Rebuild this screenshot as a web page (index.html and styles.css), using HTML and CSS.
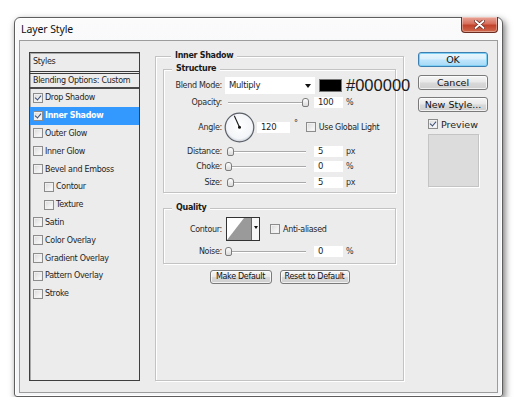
FILE: index.html
```html
<!DOCTYPE html>
<html>
<head>
<meta charset="utf-8">
<link rel="stylesheet" href="styles.css">
</head>
<body>
<div class="window">
  <div class="titlebar">
    <span class="title">Layer Style</span>
    <button class="close" aria-label="Close">
      <svg width="11" height="9" viewBox="0 0 11 9"><path d="M1.5 1 L9.5 8 M9.5 1 L1.5 8" stroke="#6b2a20" stroke-width="3.4" stroke-linecap="round"/><path d="M1.5 1 L9.5 8 M9.5 1 L1.5 8" stroke="#fff" stroke-width="1.8" stroke-linecap="round"/></svg>
    </button>
  </div>
  <div class="client">
    <div class="styles-list">
      <div class="list-head">Styles</div>
      <div class="list-blend">Blending Options: Custom</div>
      <div class="list-item"><span class="cb checked"></span>Drop Shadow</div>
      <div class="list-item selected"><span class="cb checked"></span>Inner Shadow</div>
      <div class="list-item"><span class="cb"></span>Outer Glow</div>
      <div class="list-item"><span class="cb"></span>Inner Glow</div>
      <div class="list-item"><span class="cb"></span>Bevel and Emboss</div>
      <div class="list-item sub"><span class="cb"></span>Contour</div>
      <div class="list-item sub"><span class="cb"></span>Texture</div>
      <div class="list-item"><span class="cb"></span>Satin</div>
      <div class="list-item"><span class="cb"></span>Color Overlay</div>
      <div class="list-item"><span class="cb"></span>Gradient Overlay</div>
      <div class="list-item"><span class="cb"></span>Pattern Overlay</div>
      <div class="list-item"><span class="cb"></span>Stroke</div>
    </div>

    <div class="group main">
      <div class="group-title">Inner Shadow</div>
      <div class="group sub-group structure">
        <div class="group-title">Structure</div>
        <div class="row blend-row">
          <span class="lbl">Blend Mode:</span>
          <div class="select">Multiply<span class="arrow"></span></div>
          <span class="swatch"></span>
          <span class="hex">#000000</span>
        </div>
        <div class="row opacity-row">
          <span class="lbl">Opacity:</span>
          <div class="slider"><span class="track"></span><span class="thumb" style="left:77px"></span></div>
          <span class="field">100</span>
          <span class="unit">%</span>
        </div>
        <div class="row angle-row">
          <span class="lbl">Angle:</span>
          <svg class="dial" width="31" height="31" viewBox="0 0 31 31">
            <defs><radialGradient id="dg" cx="50%" cy="45%" r="55%"><stop offset="0" stop-color="#ffffff"/><stop offset="0.8" stop-color="#f3f5f8"/><stop offset="1" stop-color="#c9ced6"/></radialGradient></defs>
            <circle cx="15.5" cy="15.5" r="14.3" fill="url(#dg)" stroke="#5b6068" stroke-width="1.2"/>
            <line x1="15.5" y1="15.2" x2="10.3" y2="3.8" stroke="#1a1a1a" stroke-width="1.1"/>
            <circle cx="15.5" cy="15.3" r="1.5" fill="#111"/>
          </svg>
          <span class="field angle-field">120</span>
          <span class="deg">°</span>
          <span class="cb global-cb"></span>
          <span class="cb-text">Use Global Light</span>
        </div>
        <div class="row slider-row r-distance">
          <span class="lbl">Distance:</span>
          <div class="slider"><span class="track"></span><span class="thumb" style="left:2px"></span></div>
          <span class="field">5</span>
          <span class="unit">px</span>
        </div>
        <div class="row slider-row r-choke">
          <span class="lbl">Choke:</span>
          <div class="slider"><span class="track"></span><span class="thumb" style="left:0px"></span></div>
          <span class="field">0</span>
          <span class="unit">%</span>
        </div>
        <div class="row slider-row r-size">
          <span class="lbl">Size:</span>
          <div class="slider"><span class="track"></span><span class="thumb" style="left:2px"></span></div>
          <span class="field">5</span>
          <span class="unit">px</span>
        </div>
      </div>

      <div class="group sub-group quality">
        <div class="group-title">Quality</div>
        <div class="row contour-row">
          <span class="lbl">Contour:</span>
          <div class="contour">
            <svg width="24" height="22" viewBox="0 0 24 22"><rect width="24" height="22" fill="#fff"/><path d="M0 22 L17 0 L24 0 L24 22 Z" fill="#9a9a9a"/></svg>
            <span class="contour-drop"><span class="arrow small"></span></span>
          </div>
          <span class="cb anti-cb"></span>
          <span class="cb-text">Anti-aliased</span>
        </div>
        <div class="row slider-row r-noise">
          <span class="lbl">Noise:</span>
          <div class="slider"><span class="track"></span><span class="thumb" style="left:0px"></span></div>
          <span class="field">0</span>
          <span class="unit">%</span>
        </div>
      </div>

      <div class="defaults">
        <button class="btn small-btn make">Make Default</button>
        <button class="btn small-btn reset">Reset to Default</button>
      </div>
    </div>

    <div class="actions">
      <button class="btn big-btn ok">OK</button>
      <button class="btn big-btn">Cancel</button>
      <button class="btn big-btn">New Style...</button>
      <div class="preview-row"><span class="cb checked"></span><span class="preview-text">Preview</span></div>
      <div class="preview-box"></div>
    </div>
  </div>
</div>
</body>
</html>
```
FILE: styles.css
```css
* { box-sizing: border-box; }
body {
  margin: 0;
  background: #ffffff;
  font-family: "DejaVu Sans", sans-serif;
  color: #1e1e1e;
}
.window {
  margin: 17px 0 0 14px;
  width: 489px;
  height: 380px;
  border: 1px solid #5e5e5e;
  border-radius: 6px 6px 3px 3px;
  background: linear-gradient(180deg, #fbfbfc 0%, #eef0f3 40%, #f5f6f8 100%);
  box-shadow: 2px 3px 7px rgba(0,0,0,0.55), inset 0 0 0 1px #ffffff;
  padding: 0 4px 4px;
  display: flex;
  flex-direction: column;
}
.titlebar {
  height: 22px;
  display: flex;
  align-items: center;
  flex: none;
}
.title {
  margin-left: 2px;
  font-family: "Noto Sans", "DejaVu Sans", sans-serif;
  font-size: 10.5px;
  color: #111;
  letter-spacing: -0.1px;
}
.close {
  margin: -1px 0 0 auto;
  align-self: flex-start;
  width: 37px;
  height: 16px;
  padding: 0;
  border: 1px solid #6b2c22;
  border-top: none;
  border-radius: 0 0 4px 4px;
  background: linear-gradient(180deg, #e9a597 0%, #d7705d 45%, #c2422b 55%, #cf6a4d 100%);
  box-shadow: inset 0 0 0 1px rgba(255,255,255,0.35);
  display: flex;
  align-items: center;
  justify-content: center;
}
.client {
  flex: 1;
  background: #ececec;
  border: 1px solid #9c9c9c;
  padding: 11px 9px;
  display: flex;
  align-items: flex-start;
  font-size: 8px;
  letter-spacing: -0.3px;
}

/* Styles list */
.styles-list {
  width: 111px;
  height: 329px;
  border: 1px solid #3f3f3f;
  box-shadow: inset 1px 1px 0 #a8a8a8;
  flex: none;
}
.list-head {
  height: 21px;
  padding: 0 0 0 3px;
  line-height: 17px;
  border-bottom: 3px double #3a3a3a;
}
.list-blend {
  height: 15px;
  padding-left: 3px;
  line-height: 13px;
  border-bottom: 2px solid #4a4a4a;
}
.list-item {
  height: 17.8px;
  display: flex;
  align-items: center;
  padding-left: 3px;
  gap: 2px;
}
.list-item.sub { padding-left: 14px; }
.list-item.selected {
  background: #3399ff;
  color: #fff;
  font-weight: bold;
}

/* Checkbox */
.cb {
  display: inline-block;
  width: 10px;
  height: 10px;
  border: 1px solid #8c8c8c;
  background: linear-gradient(135deg, #d8d8d8 0%, #f4f4f4 70%, #ffffff 100%);
  box-shadow: inset 0 0 0 1px #f0f0f0;
  flex: none;
  position: relative;
}
.cb.checked::after {
  content: "";
  position: absolute;
  left: 2px;
  top: 0px;
  width: 3px;
  height: 5px;
  border: solid #3b4e78;
  border-width: 0 1.5px 1.5px 0;
  transform: rotate(40deg);
}

/* Groups */
.group {
  border: 1px solid #c3c3c3;
  box-shadow: 1px 1px 0 #ffffff, inset 1px 1px 0 #ffffff;
}
.group-title {
  width: fit-content;
  margin: -7px 0 0 8px;
  padding: 0 4px;
  height: 12px;
  line-height: 12px;
  background: #ececec;
  font-weight: bold;
  color: #1a1a1a;
}
.main {
  margin: 4px 0 0 15px;
  width: 249px;
  height: 325px;
  padding: 0 7px;
  flex: none;
}
.sub-group { width: 233px; }
.sub-group .group-title { margin-left: 8px; }
.structure { margin-top: 7px; padding-bottom: 4px; }
.quality { margin-top: 15px; padding-bottom: 6px; }

.row {
  display: flex;
  align-items: center;
  white-space: nowrap;
}
.row > * { flex: none; }
.lbl {
  width: 58px;
  text-align: right;
  color: #2a2a2a;
}
.blend-row { margin-top: 2px; height: 17px; }
.select {
  margin-left: 3px;
  width: 90px;
  height: 17px;
  background: #fff;
  padding-left: 4px;
  line-height: 17px;
  position: relative;
  font-size: 8.5px;
}
.arrow {
  position: absolute;
  right: 4px;
  top: 7px;
  width: 0;
  height: 0;
  border-left: 3.5px solid transparent;
  border-right: 3.5px solid transparent;
  border-top: 4px solid #111;
}
.swatch {
  margin-left: 4px;
  width: 23px;
  height: 13px;
  background: #000;
  border: 1px solid #777;
}
.hex {
  margin-left: 4px;
  font-family: "Liberation Sans", Arial, sans-serif;
  font-size: 16.5px;
  letter-spacing: 0;
  color: #1a1a1a;
}
.opacity-row { margin-top: 2px; height: 12px; }
.angle-row { margin-top: 4px; height: 30px; }
.r-distance { margin-top: 3px; height: 12px; }
.r-choke { margin-top: 3px; height: 12px; }
.r-size { margin-top: 4px; height: 12px; }

.slider {
  margin-left: 3px;
  width: 84px;
  height: 12px;
  position: relative;
}
.track {
  position: absolute;
  left: 3px;
  right: 3px;
  top: 6px;
  height: 1px;
  background: #a9a9a9;
  box-shadow: 0 1px 0 #ffffff;
}
.thumb {
  position: absolute;
  top: 2px;
  width: 7px;
  height: 9px;
  border: 1px solid #7c7c7c;
  border-radius: 3px 3px 2px 2px;
  background: linear-gradient(180deg, #ffffff, #d9d9d9);
}
.field {
  margin-left: 5px;
  width: 29px;
  height: 11px;
  background: #fff;
  padding-left: 4px;
  line-height: 11px;
  font-size: 8.5px;
}
.unit { margin-left: 3px; color: #333; }
.dial { margin-left: 2px; }
.angle-field { margin-left: 2px; width: 33px; }
.deg { margin-left: 4px; align-self: flex-start; margin-top: 7px; }
.global-cb { margin-left: 8px; }
.cb-text { margin-left: 3px; }

.contour-row { margin-top: 3px; height: 24px; }
.contour {
  margin-left: 4px;
  height: 24px;
  border: 1px solid #333;
  display: flex;
  background: #fff;
}
.contour svg { display: block; }
.contour-drop {
  width: 8px;
  border-left: 1px solid #666;
  position: relative;
  background: #f7f7f7;
}
.arrow.small {
  right: 1px;
  top: 8px;
  border-left-width: 2.5px;
  border-right-width: 2.5px;
  border-top-width: 3px;
}
.anti-cb { margin-left: 10px; }
.r-noise { margin-top: 4px; height: 12px; }

.btn {
  font-family: "DejaVu Sans", sans-serif;
  color: #111;
  padding: 0;
  border: 1px solid #7a7a7a;
  border-radius: 3px;
  background: linear-gradient(180deg, #f6f6f6 0%, #e8e8e8 48%, #d9d9d9 52%, #cfcfcf 100%);
  box-shadow: inset 0 0 0 1px rgba(255,255,255,0.7);
}
.defaults {
  margin-top: 6px;
  display: flex;
  justify-content: center;
  gap: 8px;
}
.small-btn {
  height: 14px;
  font-size: 8px;
  letter-spacing: -0.3px;
  line-height: 12px;
}
.make { width: 62px; }
.reset { width: 70px; }

.actions {
  margin-left: 14px;
  width: 70px;
  display: flex;
  flex-direction: column;
  align-items: center;
  flex: none;
  letter-spacing: 0;
}
.big-btn {
  width: 70px;
  height: 15px;
  font-size: 9.5px;
  line-height: 13px;
  margin-bottom: 7.5px;
}
.ok {
  border-color: #3c7fb1;
  box-shadow: inset 0 0 0 1px #7fd0f5;
  background: linear-gradient(180deg, #eaf6fd 0%, #d9f0fc 48%, #bee6fd 52%, #a7d9f5 100%);
}
.preview-row {
  margin-top: -0.5px;
  display: flex;
  align-items: center;
  gap: 3px;
  height: 10px;
}
.preview-text { font-size: 9.5px; }
.preview-box {
  margin-top: 5px;
  width: 51px;
  height: 53px;
  background: #dcdcdc;
  border: 1px solid #c4c4c4;
  box-shadow: 1px 1px 0 #fff;
}
```
